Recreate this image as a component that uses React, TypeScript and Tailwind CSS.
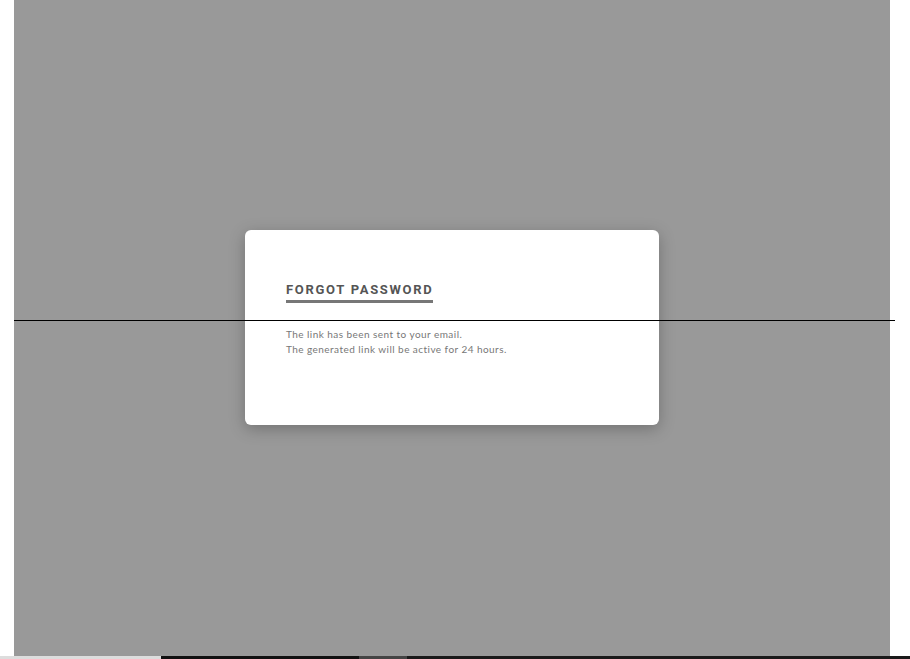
import React from 'react';

export default function App() {
  return (
    <div className="relative w-[910px] h-[659px] bg-white overflow-hidden">
      <div className="ml-[14px] w-[876px] h-[656px] bg-[#999999] flex justify-center pt-[230px]">
        <div className="w-[414px] h-[195px] bg-white rounded-[6px] shadow-[0_4px_16px_rgba(0,0,0,0.25)] pl-[41px] pt-[46px]">
          <div className="inline-block">
            <h2 className="font-['Roboto',sans-serif] font-bold text-[13px] leading-[15px] tracking-[1.7px] text-[#555555]">
              FORGOT PASSWORD
            </h2>
            <div className="mt-[3px] h-[3px] w-[147px] bg-[#777777]" />
          </div>
          <div className="mt-[24px] font-['Lato',sans-serif] text-[10px] leading-[15px] tracking-[0.45px] text-[#777777]">
            <p>The link has been sent to your email.</p>
            <p>The generated link will be active for 24 hours.</p>
          </div>
        </div>
      </div>
      {/* guide line across the page */}
      <div className="absolute left-[14px] top-[320px] w-[881px] h-px bg-black" />
      <div className="flex h-[3px]">
        <div className="w-[161px] bg-[#dddddd]" />
        <div className="w-[198px] bg-[#111111]" />
        <div className="w-[48px] bg-[#444444]" />
        <div className="flex-1 bg-[#1a1a1a]" />
      </div>
    </div>
  );
}
